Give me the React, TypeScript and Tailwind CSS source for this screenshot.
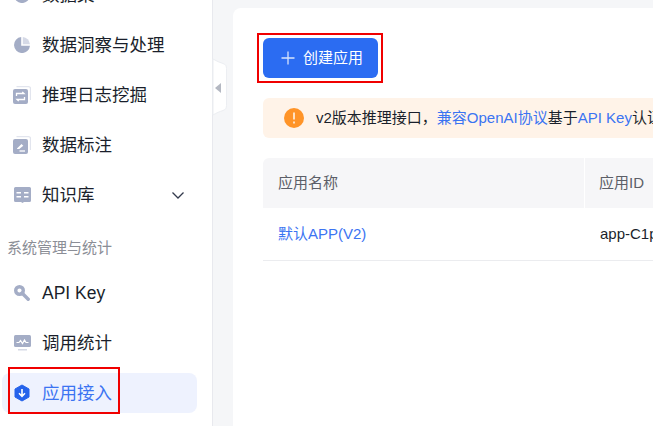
import React from "react";

const FONT = "font-['Liberation_Sans','Noto_Sans_CJK_SC',sans-serif]";

const PieIcon = () => (
  <svg className="shrink-0" width="16" height="16" viewBox="0 0 16 16" fill="#a4adc6">
    <path d="M7.200 .1A8 8 0 1 0 16 8.800H7.200z" />
    <path d="M8.800 0v7.200H16A8 8 0 0 0 8.800 0z" fill="#d5d9e6" />
  </svg>
);

const SyncIcon = () => (
  <svg className="shrink-0" width="18" height="18" viewBox="0 0 18 18" fill="none">
    <path d="M3.500 .7h12a2 2 0 0 1 2 2V14" stroke="#e2e5ee" strokeWidth="1.300" />
    <rect x="0" y="3" width="15" height="15" rx="2" fill="#a4adc6" />
    <path d="M3.500 10V7.500h7.500l-1.700-1.600M11.500 11v2.500H4l1.700 1.600" stroke="#fff" strokeWidth="1.300" />
  </svg>
);

const EditIcon = () => (
  <svg className="shrink-0" width="18" height="18" viewBox="0 0 18 18" fill="none">
    <path d="M3.500 .7h12a2 2 0 0 1 2 2V14" stroke="#e2e5ee" strokeWidth="1.300" />
    <rect x="0" y="3" width="15" height="15" rx="2" fill="#a4adc6" />
    <path d="M4 12.500l4.500-4.500 1.800 1.800-4 3.200H4z" fill="#fff" />
    <path d="M6.500 15h5.500" stroke="#fff" strokeWidth="1.300" />
  </svg>
);

const BookIcon = () => (
  <svg className="shrink-0" width="17" height="16" viewBox="0 0 17 16" fill="#a4adc6">
    <path d="M1.500 0h14a1.500 1.500 0 0 1 1.500 1.500v12a1.500 1.500 0 0 1-1.500 1.500H10l-1.500 1L7 15H1.500A1.500 1.500 0 0 1 0 13.500v-12A1.500 1.500 0 0 1 1.500 0z" />
    <path d="M2.500 5H7v1.500H2.500zM10 5h4.500v1.500H10zM2.500 9H7v1.500H2.500zM10 9h4.500v1.500H10z" fill="#fff" />
  </svg>
);

const KeyIcon = () => (
  <svg className="shrink-0" width="16" height="16" viewBox="0 0 16 16" fill="none">
    <circle cx="5.500" cy="5.500" r="3.800" stroke="#a4adc6" strokeWidth="3.400" />
    <path d="M8 8l6.200 6.200" stroke="#a4adc6" strokeWidth="3.400" strokeLinecap="round" />
  </svg>
);

const MonitorIcon = () => (
  <svg className="shrink-0" width="17" height="16" viewBox="0 0 17 16" fill="none">
    <rect x="0" y="0" width="17" height="12" rx="1.500" fill="#a4adc6" />
    <path d="M2.500 7.500h2.500l1.500-2L8.500 8.500l2-3.500 1.500 2.500h2.500" stroke="#fff" strokeWidth="1.200" />
    <rect x="4" y="14" width="9" height="1.500" fill="#d5d9e5" />
  </svg>
);

const HexDownIcon = () => (
  <svg className="shrink-0" width="16" height="18" viewBox="0 0 16 18" fill="none">
    <path d="M8 1l7 4v8l-7 4-7-4V5z" fill="#2563eb" stroke="#2563eb" strokeLinejoin="round" />
    <path d="M8 5v7M5 9.300L8 12.300l3-3" stroke="#fff" strokeWidth="1.600" />
  </svg>
);

const Chevron = () => (
  <svg className="shrink-0" width="14" height="9" viewBox="0 0 14 9" fill="none">
    <path d="M1.500 1.500L7 7l5.500-5.500" stroke="#333a4d" strokeWidth="1.300" />
  </svg>
);

type NavProps = { icon?: React.ReactNode; label: string; active?: boolean; arrow?: boolean };

const NavItem = ({ icon, label, active, arrow }: NavProps) => (
  <div
    className={`flex items-center h-10 pl-3 pr-3 rounded-lg gap-3 text-[17.5px] whitespace-nowrap ${
      active ? "bg-[#eef2fe] text-[#3b74f2]" : "text-[#1a1f2b]"
    }`}
  >
    <span className="w-4 flex justify-center shrink-0">{icon}</span>
    <span className="flex-1">{label}</span>
    {arrow && <Chevron />}
  </div>
);

export default function App() {
  return (
    <div className={`${FONT} relative flex w-[653px] h-[426px] overflow-hidden bg-[#f5f6f8]`}>
      <aside className="w-[213px] shrink-0 h-full bg-white border-r border-[#e8e9ee] pl-[2px] pr-[15px] overflow-hidden">
        <div className="flex flex-col gap-[10px] -mt-[25px]">
          <NavItem icon={<PieIcon />} label="数据集" />
          <NavItem icon={<PieIcon />} label="数据洞察与处理" />
          <NavItem icon={<SyncIcon />} label="推理日志挖掘" />
          <NavItem icon={<EditIcon />} label="数据标注" />
          <NavItem icon={<BookIcon />} label="知识库" arrow />
        </div>
        <div className="h-[28px] mt-[19px] mb-[11px] pl-[5px] flex items-center text-[15px] text-[#8b8e96] whitespace-nowrap">
          系统管理与统计
        </div>
        <div className="flex flex-col gap-[10px]">
          <NavItem icon={<KeyIcon />} label="API Key" />
          <NavItem icon={<MonitorIcon />} label="调用统计" />
          <NavItem icon={<HexDownIcon />} label="应用接入" active />
        </div>
      </aside>

      {/* collapse handle */}
      <svg className="absolute left-[212px] top-[58px]" width="16" height="58" viewBox="0 0 16 58" fill="none">
        <path
          d="M1 1C4 3 8 4.500 11 5.500c2.500 .8 3.500 2.500 3.500 5v37c0 2.500-1 4.200-3.500 5C8 53.500 4 55 1 57z"
          fill="#fff"
          stroke="#eceef2"
        />
        <path d="M9 25v10l-6-5z" fill="#b4b8c2" />
      </svg>

      <main className="flex-1 min-w-0 pl-5 pt-2 overflow-hidden">
        <div className="w-[700px] h-[500px] bg-white rounded-tl-lg pl-[30px] pt-[30px]">
          <button className="flex items-center gap-[8px] w-[115px] h-10 pl-[18px] rounded-md bg-[#2b6cf2] text-white text-[15px]">
            <svg className="shrink-0" width="14" height="14" viewBox="0 0 14 14" fill="none">
              <path d="M7 .5v13M.5 7h13" stroke="#d7e3fc" strokeWidth="1.300" />
            </svg>
            创建应用
          </button>

          <div className="mt-5 h-10 flex items-center rounded-md bg-[#fff3e8] pl-[21px] text-[15px] text-[#1a1f2b] whitespace-nowrap">
            <svg className="shrink-0 mr-[12px]" width="20" height="20" viewBox="0 0 20 20">
              <circle cx="10" cy="10" r="10" fill="#ff9428" />
              <path d="M10 4.500v7M10 13.500v2" stroke="#ffe9d2" strokeWidth="1.800" />
            </svg>
            v2版本推理接口，
            <span className="text-[#3b74f2]">兼容OpenAI协议</span>
            基于
            <span className="text-[#3b74f2]">API Key</span>
            认证
          </div>

          <div className="mt-5 text-[15px]">
            <div className="flex h-[50px] items-center bg-[#f6f6f8] rounded-t-md text-[#5c5f68]">
              <div className="w-[322px] h-full pl-[15px] flex items-center border-r border-white">应用名称</div>
              <div className="pl-[14px]">应用ID</div>
            </div>
            <div className="flex h-[53px] items-center border-b border-[#ebecef]">
              <div className="w-[322px] pl-[15px] text-[#3b74f2]">默认APP(V2)</div>
              <div className="pl-[15px] text-[#1a1f2b] whitespace-nowrap">app-C1pXk7mQ2vLd9</div>
            </div>
          </div>
        </div>
      </main>

      {/* red annotation boxes */}
      <div className="absolute left-[257px] top-[33px] w-[126px] h-[50px] border-2 border-[#f00000]" />
      <div className="absolute left-[8px] top-[367px] w-[112px] h-[47px] border-2 border-[#f00000]" />
    </div>
  );
}
